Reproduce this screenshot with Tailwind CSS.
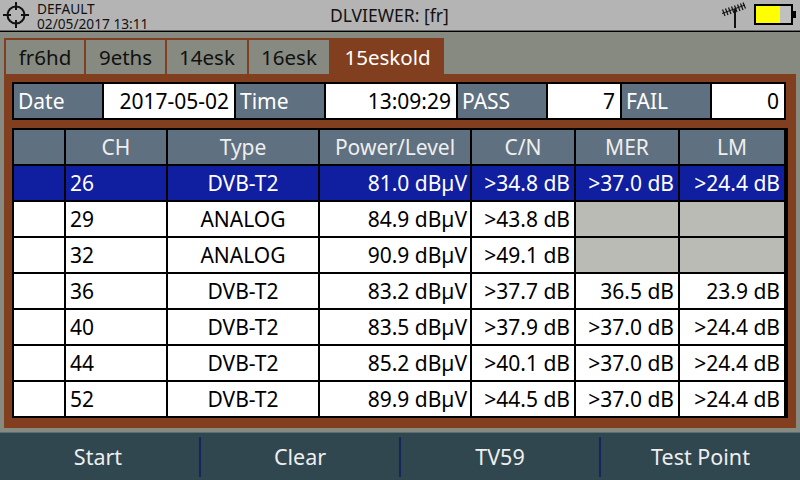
<!DOCTYPE html>
<html lang="en">
<head>
<meta charset="utf-8">
<title>DLVIEWER</title>
<script src="https://cdn.jsdelivr.net/npm/@tailwindcss/browser@4"></script>
</head>
<body>
<div class="w-[800px] h-[480px] flex flex-col overflow-hidden bg-[#868a80] text-black font-['Noto_Sans',sans-serif]">

  <!-- status bar -->
  <header class="h-[32px] shrink-0 flex items-start bg-[#b4b4b4] shadow-[inset_0_-1px_0_#000,inset_0_-2px_0_#666] relative">
    <svg class="w-[30px] h-[30px] ml-[1px] shrink-0" viewBox="0 0 30 30" fill="none" stroke="#111" stroke-width="2">
      <circle cx="15" cy="15" r="8.5"/>
      <path d="M15 2V10M15 20V28M2 15H10M20 15H28"/>
    </svg>
    <div class="ml-[6px] pt-[1px] text-[13.7px] leading-[15px] text-[#111]">
      <div>DEFAULT</div>
      <div>02/05/2017 13:11</div>
    </div>
    <h1 class="absolute left-[330px] top-[4px] text-[17.5px] leading-[22px] text-[#111]">DLVIEWER: [fr]</h1>
    <div class="ml-auto flex items-start">
      <svg class="w-[26px] h-[30px] shrink-0 mr-[6px]" viewBox="0 0 26 30" fill="none" stroke="#111">
        <path d="M13 9V28" stroke-width="2"/>
        <path d="M0 13.5L23 5" stroke-width="1"/>
        <path d="M0.5 9.5L3 16M3.5 8.5L6 15M6.5 7.5L9 14M9.5 6.5L12 13M12.5 5.5L15 12M15.5 4.5L18 11M18.5 3.5L21 10M21 2.5L23.5 8.5" stroke-width="1.2"/>
      </svg>
      <div class="flex items-center mt-[4px] mr-[4px]">
        <div class="w-[39px] h-[21px] border-2 border-black bg-[#c0c0c0]">
          <div class="w-[24px] h-full bg-[#ffff00]"></div>
        </div>
        <div class="w-[3px] h-[7px] bg-black"></div>
      </div>
    </div>
  </header>

  <main class="flex-1 px-[4px] pt-[6px]">
    <!-- tabs -->
    <div class="flex w-[440px] h-[36px] bg-[#823f1f] pt-[2px] pl-[2px] gap-[2px] text-[20.5px] leading-[34px] text-center text-[#111]">
      <div class="w-[78px] bg-[#868a80]">fr6hd</div>
      <div class="w-[79px] bg-[#868a80]">9eths</div>
      <div class="w-[80px] bg-[#868a80]">14esk</div>
      <div class="w-[80px] bg-[#868a80]">16esk</div>
      <div class="flex-1 text-white">15eskold</div>
    </div>

    <section class="h-[354px] bg-[#823f1f] pt-[8px] pl-[8px] text-[21px] leading-[34px]">
      <!-- summary row -->
      <div class="w-fit grid grid-cols-[88px_130px_88px_130px_88px_72px_88px_72px] gap-[2px] p-[2px] bg-black">
        <div class="bg-[#5f7080] text-white pl-[4px]">Date</div>
        <div class="bg-white text-right pr-[5px]">2017-05-02</div>
        <div class="bg-[#5f7080] text-white pl-[4px]">Time</div>
        <div class="bg-white text-right pr-[5px]">13:09:29</div>
        <div class="bg-[#5f7080] text-white pl-[4px]">PASS</div>
        <div class="bg-white text-right pr-[5px]">7</div>
        <div class="bg-[#5f7080] text-white pl-[4px]">FAIL</div>
        <div class="bg-white text-right pr-[5px]">0</div>
      </div>

      <!-- measurements -->
      <div class="mt-[8px] w-fit grid grid-cols-[50px_100px_150px_150px_102px_102px_104px] auto-rows-[34px] gap-[2px] pl-[2px] pt-[2px] pb-[2px] pr-[4px] bg-black">
        <div class="bg-[#5f7080]"></div>
        <div class="bg-[#5f7080] text-[#eeeeee] text-center">CH</div>
        <div class="bg-[#5f7080] text-[#eeeeee] text-center">Type</div>
        <div class="bg-[#5f7080] text-[#eeeeee] text-center">Power/Level</div>
        <div class="bg-[#5f7080] text-[#eeeeee] text-center">C/N</div>
        <div class="bg-[#5f7080] text-[#eeeeee] text-center">MER</div>
        <div class="bg-[#5f7080] text-[#eeeeee] text-center">LM</div>

        <div class="bg-[#101ea0]"></div>
        <div class="bg-[#101ea0] text-white pl-[4px]">26</div>
        <div class="bg-[#101ea0] text-white text-center">DVB-T2</div>
        <div class="bg-[#101ea0] text-white text-right pr-[3px]">81.0 dBµV</div>
        <div class="bg-[#101ea0] text-white text-right pr-[4px]">&gt;34.8 dB</div>
        <div class="bg-[#101ea0] text-white text-right pr-[4px]">&gt;37.0 dB</div>
        <div class="bg-[#101ea0] text-white text-right pr-[4px]">&gt;24.4 dB</div>

        <div class="bg-white"></div>
        <div class="bg-white pl-[4px]">29</div>
        <div class="bg-white text-center">ANALOG</div>
        <div class="bg-white text-right pr-[3px]">84.9 dBµV</div>
        <div class="bg-white text-right pr-[4px]">&gt;43.8 dB</div>
        <div class="bg-[#b9bbb4]"></div>
        <div class="bg-[#b9bbb4]"></div>

        <div class="bg-white"></div>
        <div class="bg-white pl-[4px]">32</div>
        <div class="bg-white text-center">ANALOG</div>
        <div class="bg-white text-right pr-[3px]">90.9 dBµV</div>
        <div class="bg-white text-right pr-[4px]">&gt;49.1 dB</div>
        <div class="bg-[#b9bbb4]"></div>
        <div class="bg-[#b9bbb4]"></div>

        <div class="bg-white"></div>
        <div class="bg-white pl-[4px]">36</div>
        <div class="bg-white text-center">DVB-T2</div>
        <div class="bg-white text-right pr-[3px]">83.2 dBµV</div>
        <div class="bg-white text-right pr-[4px]">&gt;37.7 dB</div>
        <div class="bg-white text-right pr-[4px]">36.5 dB</div>
        <div class="bg-white text-right pr-[4px]">23.9 dB</div>

        <div class="bg-white"></div>
        <div class="bg-white pl-[4px]">40</div>
        <div class="bg-white text-center">DVB-T2</div>
        <div class="bg-white text-right pr-[3px]">83.5 dBµV</div>
        <div class="bg-white text-right pr-[4px]">&gt;37.9 dB</div>
        <div class="bg-white text-right pr-[4px]">&gt;37.0 dB</div>
        <div class="bg-white text-right pr-[4px]">&gt;24.4 dB</div>

        <div class="bg-white"></div>
        <div class="bg-white pl-[4px]">44</div>
        <div class="bg-white text-center">DVB-T2</div>
        <div class="bg-white text-right pr-[3px]">85.2 dBµV</div>
        <div class="bg-white text-right pr-[4px]">&gt;40.1 dB</div>
        <div class="bg-white text-right pr-[4px]">&gt;37.0 dB</div>
        <div class="bg-white text-right pr-[4px]">&gt;24.4 dB</div>

        <div class="bg-white"></div>
        <div class="bg-white pl-[4px]">52</div>
        <div class="bg-white text-center">DVB-T2</div>
        <div class="bg-white text-right pr-[3px]">89.9 dBµV</div>
        <div class="bg-white text-right pr-[4px]">&gt;44.5 dB</div>
        <div class="bg-white text-right pr-[4px]">&gt;37.0 dB</div>
        <div class="bg-white text-right pr-[4px]">&gt;24.4 dB</div>
      </div>
    </section>
  </main>

  <!-- softkeys -->
  <footer class="h-[48px] shrink-0 flex items-center bg-[#31474f] border-t border-t-[#5a6e74] text-[21.5px] text-[#eeeeee] text-center">
    <div class="w-[199px] leading-[40px] pr-[3px]">Start</div>
    <div class="w-[202px] h-[40px] leading-[40px] border-l-2 border-r-2 border-[#15275a]">Clear</div>
    <div class="w-[198px] leading-[40px]">TV59</div>
    <div class="flex-1 h-[40px] leading-[40px] border-l-2 border-[#15275a]">Test Point</div>
  </footer>
</div>
</body>
</html>
